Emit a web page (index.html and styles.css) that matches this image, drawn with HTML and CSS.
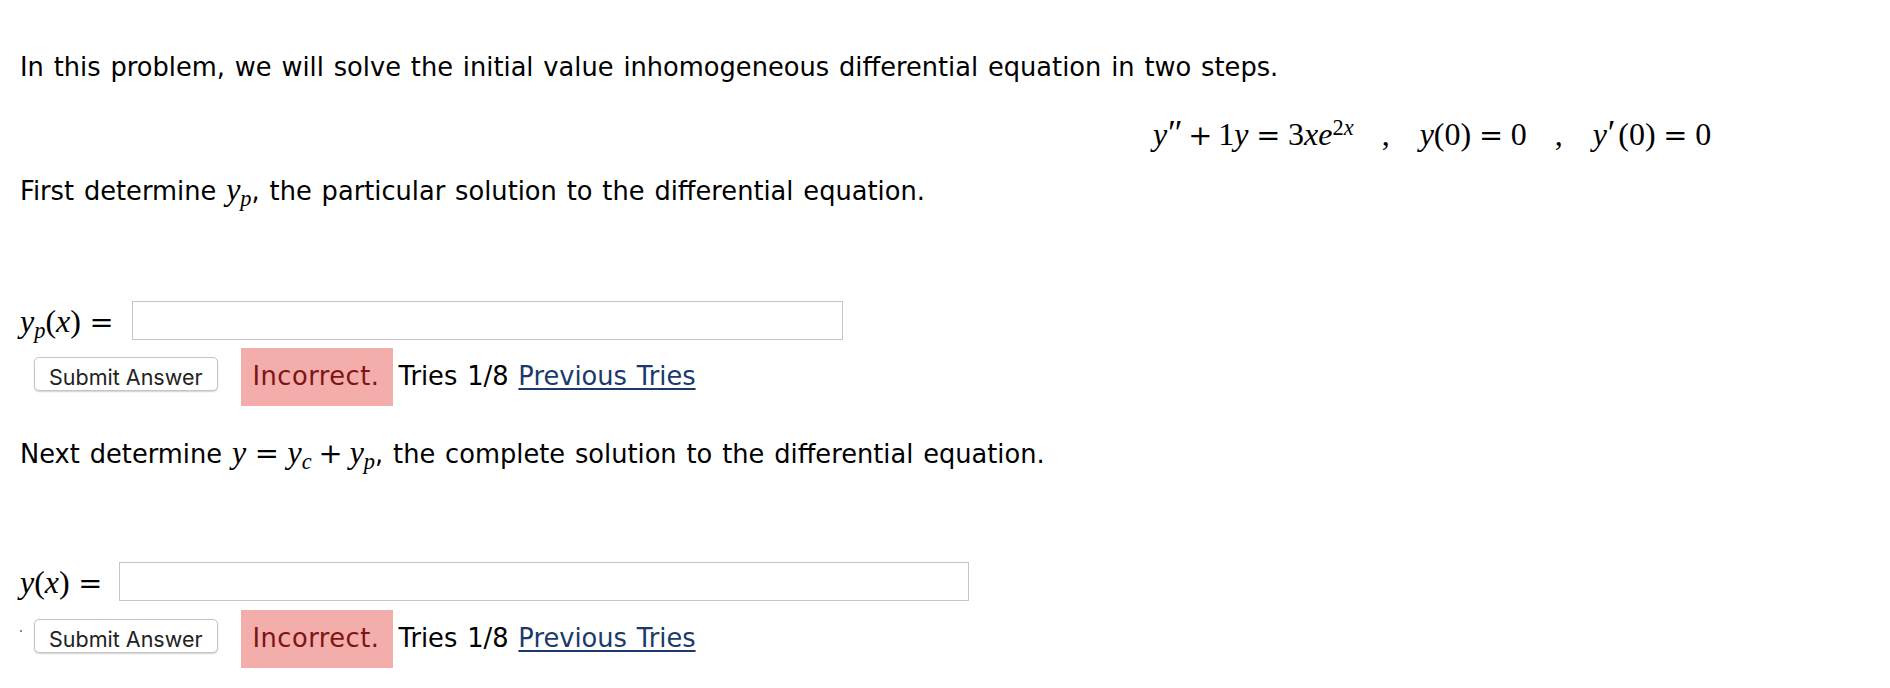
FILE: index.html
```html
<!DOCTYPE html>
<html lang="en">
<head>
<meta charset="utf-8">
<title>Inhomogeneous differential equation</title>
<link rel="stylesheet" href="styles.css">
</head>
<body>
<div class="problem">
  <p class="text">In this problem, we will solve the initial value inhomogeneous differential equation in two steps.</p>
  <div class="display"><span class="math"><i>y</i><span class="prime">″</span><span class="bin">+</span>1<i>y</i><span class="rel">=</span>3<i>x</i><i>e</i><sup class="sup">2<i>x</i></sup><span class="comma">,</span><i>y</i>(0)<span class="rel">=</span>0<span class="comma">,</span><i>y</i><span class="prime prime1">′</span>(0)<span class="rel">=</span>0</span></div>
  <p class="text line3">First determine <span class="math inline"><i>y</i><sub class="sub"><i>p</i></sub></span>, the particular solution to the differential equation.</p>
  <div class="answer answer-1"><span class="math label"><i>y</i><sub class="sub"><i>p</i></sub>(<i>x</i>)<span class="rel last">=</span></span><input class="ans ans-p" type="text" aria-label="y_p(x)"></div>
  <div class="result result-1"><button class="submit" type="button">Submit Answer</button><span class="incorrect">Incorrect.</span><span class="tries">Tries 1/8 <a class="prev" href="#">Previous Tries</a></span></div>
  <p class="text line4">Next determine <span class="math inline"><i>y</i><span class="rel">=</span><i>y</i><sub class="sub"><i>c</i></sub><span class="bin">+</span><i>y</i><sub class="sub"><i>p</i></sub></span>, the complete solution to the differential equation.</p>
  <div class="answer answer-2"><span class="math label"><i>y</i>(<i>x</i>)<span class="rel last">=</span></span><input class="ans ans-y" type="text" aria-label="y(x)"></div>
  <div class="result result-2"><span class="dot"></span><button class="submit" type="button">Submit Answer</button><span class="incorrect">Incorrect.</span><span class="tries">Tries 1/8 <a class="prev" href="#">Previous Tries</a></span></div>
</div>
</body>
</html>
```

FILE: styles.css
```css
html, body {
  margin: 0;
  padding: 0;
  background: #ffffff;
}

.problem {
  padding: 52px 0 0 20px;
  font-family: "DejaVu Sans", Verdana, sans-serif;
  font-size: 25.7px;
  word-spacing: 1.7px;
  color: #000000;
}

.text {
  margin: 0;
  line-height: 30px;
  white-space: nowrap;
}

.math {
  font-family: "Liberation Serif", "Times New Roman", serif;
  font-size: 32px;
  word-spacing: 0;
  font-style: normal;
}

.math i {
  font-style: italic;
}

.math.inline {
  line-height: 0;
}

.sub {
  font-size: 0.7em;
  vertical-align: -0.25em;
  line-height: 0;
}

.sup {
  font-size: 0.7em;
  vertical-align: 0.45em;
  line-height: 0;
}

.rel,
.bin {
  font-family: "DejaVu Serif", "Liberation Serif", serif;
  font-size: 0.9em;
  line-height: 0;
}

.rel {
  margin: 0 0.3em;
}

.rel.last {
  margin-right: 0;
}

.bin {
  margin: 0 0.24em;
}

.display .rel {
  margin: 0 0.27em;
}

.display .bin {
  margin: 0 0.2em;
}

.prime {
  font-family: "Liberation Serif", "DejaVu Serif", serif;
  font-size: 1.1em;
  line-height: 0;
  margin-left: 0.02em;
}

.prime1 {
  margin-right: 0.08em;
}

.comma {
  margin: 0 30px 0 28px;
}

.display {
  margin-top: 32px;
  padding-left: 1133px;
  height: 40px;
  line-height: 40px;
  white-space: nowrap;
}

.line3 {
  margin-top: 22px;
}

.answer {
  display: flex;
  align-items: center;
  height: 39px;
}

.answer-1 {
  margin-top: 95px;
}

.answer-2 {
  margin-top: 93px;
}

.label {
  line-height: 30px;
  white-space: nowrap;
}

.ans {
  box-sizing: border-box;
  height: 39px;
  border: 1px solid #c6c6c6;
  border-radius: 0;
  background: #ffffff;
  margin: 0 0 0 18px;
  padding: 0 6px;
  font-size: 20px;
  outline: none;
}

.ans-p {
  width: 711px;
}

.ans-y {
  width: 850px;
  margin-left: 17px;
}

.result {
  line-height: 30px;
  white-space: nowrap;
}

.result-1 {
  margin-top: 8px;
}

.result-2 {
  margin-top: 9px;
}

.line4 {
  margin-top: 33px;
}

.submit {
  display: inline-block;
  vertical-align: baseline;
  box-sizing: border-box;
  height: 34px;
  margin: 0 0 0 14px;
  padding: 6px 14px 0 14px;
  font-family: Inter, "Liberation Sans", sans-serif;
  font-size: 21.5px;
  word-spacing: 0;
  color: #222222;
  background: #ffffff;
  border: 1px solid #c4c4c4;
  border-radius: 5px;
  box-shadow: 0 1px 1.5px rgba(0, 0, 0, 0.18);
}

.result-2 .submit {
  margin-left: 0;
}

.dot {
  display: inline-block;
  width: 2px;
  height: 2px;
  background: #8a8a8a;
  vertical-align: 15px;
  margin-right: 12px;
}

.incorrect {
  display: inline-block;
  margin-left: 23px;
  padding: 13px 14px 15px 12px;
  line-height: 30px;
  letter-spacing: 0.5px;
  background: #f3adab;
  color: #7e1414;
}

.tries {
  margin-left: 5px;
}

.prev {
  color: #1b3a6b;
  text-decoration: underline;
  text-decoration-thickness: 1.5px;
  text-underline-offset: 3px;
}
```
